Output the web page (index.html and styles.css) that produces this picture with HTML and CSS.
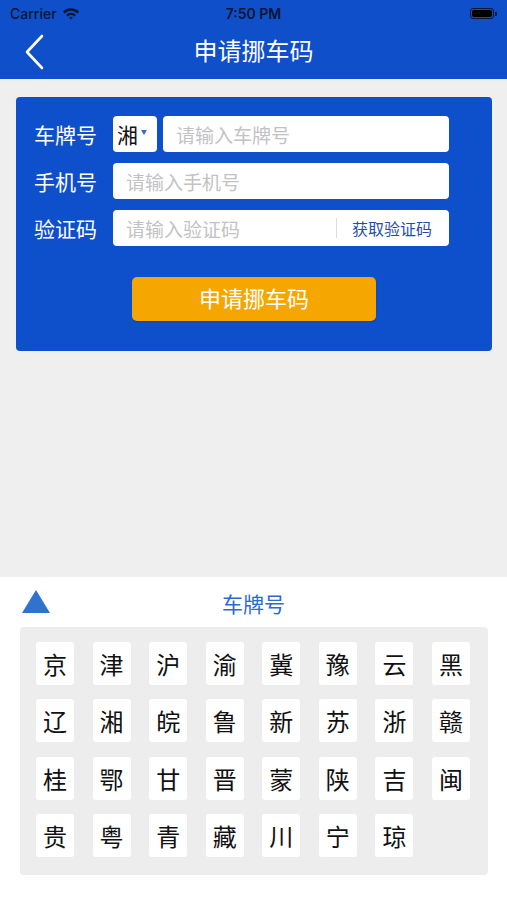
FILE: index.html
```html
<!DOCTYPE html>
<html lang="zh">
<head>
<meta charset="utf-8">
<title>申请挪车码</title>
<link rel="stylesheet" href="styles.css">
</head>
<body>
<div class="app">
  <header class="topbar">
    <div class="status">
      <div class="status-left">
        <span class="carrier">Carrier</span>
        <svg class="wifi" width="18" height="13" viewBox="0 0 18 13">
          <path d="M1 4.6 A11.5 11.5 0 0 1 17 4.6 L15.3 6.4 A9 9 0 0 0 2.7 6.4 Z" fill="#0a1633"/>
          <path d="M4.1 7.7 A7 7 0 0 1 13.9 7.7 L12.2 9.4 A4.6 4.6 0 0 0 5.8 9.4 Z" fill="#0a1633"/>
          <path d="M7.2 10.7 A2.6 2.6 0 0 1 10.8 10.7 L9 12.6 Z" fill="#0a1633"/>
        </svg>
      </div>
      <span class="time">7:50 PM</span>
      <div class="status-right">
        <span class="battery"><span class="battery-fill"></span></span><span class="battery-cap"></span>
      </div>
    </div>
    <div class="nav">
      <svg class="back" width="22" height="36" viewBox="0 0 22 36">
        <path d="M18 2 L3 18 L18 34" fill="none" stroke="#fff" stroke-width="2.6" stroke-linecap="round" stroke-linejoin="round"/>
      </svg>
      <h1 class="title">申请挪车码</h1>
    </div>
  </header>

  <main class="content">
    <section class="card">
      <div class="row">
        <span class="label">车牌号</span>
        <div class="fields">
          <div class="province"><span class="prov-text">湘</span><span class="caret"></span></div>
          <div class="input grow"><span class="ph">请输入车牌号</span></div>
        </div>
      </div>
      <div class="row">
        <span class="label">手机号</span>
        <div class="fields">
          <div class="input grow"><span class="ph">请输入手机号</span></div>
        </div>
      </div>
      <div class="row">
        <span class="label">验证码</span>
        <div class="fields">
          <div class="input grow code">
            <span class="ph">请输入验证码</span>
            <span class="divider"></span>
            <span class="get-code">获取验证码</span>
          </div>
        </div>
      </div>
      <div class="btn-wrap">
        <button class="submit">申请挪车码</button>
      </div>
    </section>
  </main>

  <section class="keyboard">
    <div class="kb-head">
      <svg class="kb-toggle" width="28" height="23" viewBox="0 0 28 23">
        <polygon points="14,0 28,23 0,23" fill="#2f73cf"/>
      </svg>
      <span class="kb-title">车牌号</span>
    </div>
    <div class="kb-grid">
      <span class="key">京</span><span class="key">津</span><span class="key">沪</span><span class="key">渝</span><span class="key">冀</span><span class="key">豫</span><span class="key">云</span><span class="key">黑</span>
      <span class="key">辽</span><span class="key">湘</span><span class="key">皖</span><span class="key">鲁</span><span class="key">新</span><span class="key">苏</span><span class="key">浙</span><span class="key">赣</span>
      <span class="key">桂</span><span class="key">鄂</span><span class="key">甘</span><span class="key">晋</span><span class="key">蒙</span><span class="key">陕</span><span class="key">吉</span><span class="key">闽</span>
      <span class="key">贵</span><span class="key">粤</span><span class="key">青</span><span class="key">藏</span><span class="key">川</span><span class="key">宁</span><span class="key">琼</span>
    </div>
  </section>
</div>
</body>
</html>
```

FILE: styles.css
```css
* { box-sizing: border-box; }

html, body {
  margin: 0;
  padding: 0;
}

body {
  width: 507px;
  height: 900px;
  overflow: hidden;
  font-family: "Noto Sans CJK SC", "Noto Sans", sans-serif;
  background: #efefef;
}

.app {
  display: flex;
  flex-direction: column;
  height: 900px;
}

/* ---------- top bar ---------- */
.topbar {
  background: #0f4fca;
  height: 79px;
  display: flex;
  flex-direction: column;
  flex: none;
}

.status {
  height: 27px;
  display: flex;
  align-items: center;
  justify-content: space-between;
  padding: 0 10px 0 10px;
  font-family: Inter, "Liberation Sans", sans-serif;
  color: #0a1633;
}

.status-left {
  display: flex;
  align-items: center;
  gap: 5px;
  width: 120px;
}

.carrier {
  font-size: 14px;
  font-weight: 500;
}

.time {
  font-size: 14px;
  font-weight: 600;
}

.status-right {
  width: 120px;
  display: flex;
  justify-content: flex-end;
  align-items: center;
}

.battery {
  width: 24px;
  height: 11px;
  border-radius: 3px;
  border: 1px solid #0a1633;
  padding: 1px;
  display: flex;
}

.battery-fill {
  flex: 1;
  background: #000;
  border-radius: 2px;
}

.battery-cap {
  width: 2px;
  height: 4px;
  background: #0a1633;
  border-radius: 0 1px 1px 0;
  margin-left: 1px;
}

.nav {
  flex: 1;
  display: flex;
  align-items: center;
  justify-content: center;
  position: relative;
}

.back {
  position: absolute;
  left: 24px;
  top: 7px;
}

.title {
  margin: 0;
  font-size: 24px;
  font-weight: 400;
  color: #fff;
  margin-top: -7px;
}

/* ---------- content ---------- */
.content {
  flex: 1;
  padding: 18px 15px 0 16px;
}

.card {
  background: #0e4fcb;
  border-radius: 4px;
  padding: 19px 43px 30px 18px;
  display: flex;
  flex-direction: column;
  gap: 11px;
}

.row {
  display: flex;
  align-items: center;
  height: 36px;
}

.label {
  width: 79px;
  flex: none;
  color: #fff;
  font-size: 21px;
  line-height: 36px;
}

.fields {
  flex: 1;
  display: flex;
  gap: 6px;
  height: 36px;
}

.province {
  width: 44px;
  flex: none;
  background: #fff;
  border-radius: 4px;
  display: flex;
  align-items: center;
  padding-left: 4px;
}

.prov-text {
  font-size: 21px;
  color: #111;
  line-height: 1;
}

.caret {
  width: 0;
  height: 0;
  border-left: 3.5px solid transparent;
  border-right: 3.5px solid transparent;
  border-top: 5px solid #2f6fd0;
  margin-left: 3px;
  margin-top: -3px;
}

.input {
  background: #fff;
  border-radius: 4px;
  display: flex;
  align-items: center;
  padding: 0 14px 0 13px;
}

.grow { flex: 1; }

.ph {
  font-size: 19px;
  color: #c2c2c4;
  flex: 1;
}

.divider {
  width: 1px;
  height: 20px;
  background: #dcdcdc;
  margin-right: 15px;
}

.get-code {
  font-size: 16px;
  color: #1f4fae;
  margin-right: 3px;
}

.btn-wrap {
  display: flex;
  justify-content: center;
  margin-top: 20px;
  margin-right: -25px;
}

.submit {
  width: 244px;
  height: 44px;
  border: none;
  border-radius: 5px;
  background: #f5a600;
  color: #fff;
  font-family: "Noto Sans CJK SC", sans-serif;
  font-size: 22px;
  line-height: 1;
  padding: 0 0 4px 0;
  box-shadow: 0 1px 1px rgba(0,0,0,0.15);
}

/* ---------- keyboard ---------- */
.keyboard {
  flex: none;
  height: 323px;
  background: #fff;
  display: flex;
  flex-direction: column;
}

.kb-head {
  height: 50px;
  display: flex;
  align-items: center;
  justify-content: center;
  position: relative;
}

.kb-toggle {
  position: absolute;
  left: 22px;
  top: 13px;
}

.kb-title {
  font-size: 21px;
  color: #2a6bcf;
  margin-top: 2px;
}

.kb-grid {
  margin: 0 19px 0 20px;
  background: #ededed;
  border-radius: 4px;
  padding: 15px 18px 18px 16px;
  display: grid;
  grid-template-columns: repeat(8, 38px);
  grid-auto-rows: 43px;
  justify-content: space-between;
  row-gap: 14.3px;
}

.key {
  background: #fff;
  border-radius: 3px;
  display: flex;
  align-items: center;
  justify-content: center;
  font-size: 24px;
  color: #111;
}
```
